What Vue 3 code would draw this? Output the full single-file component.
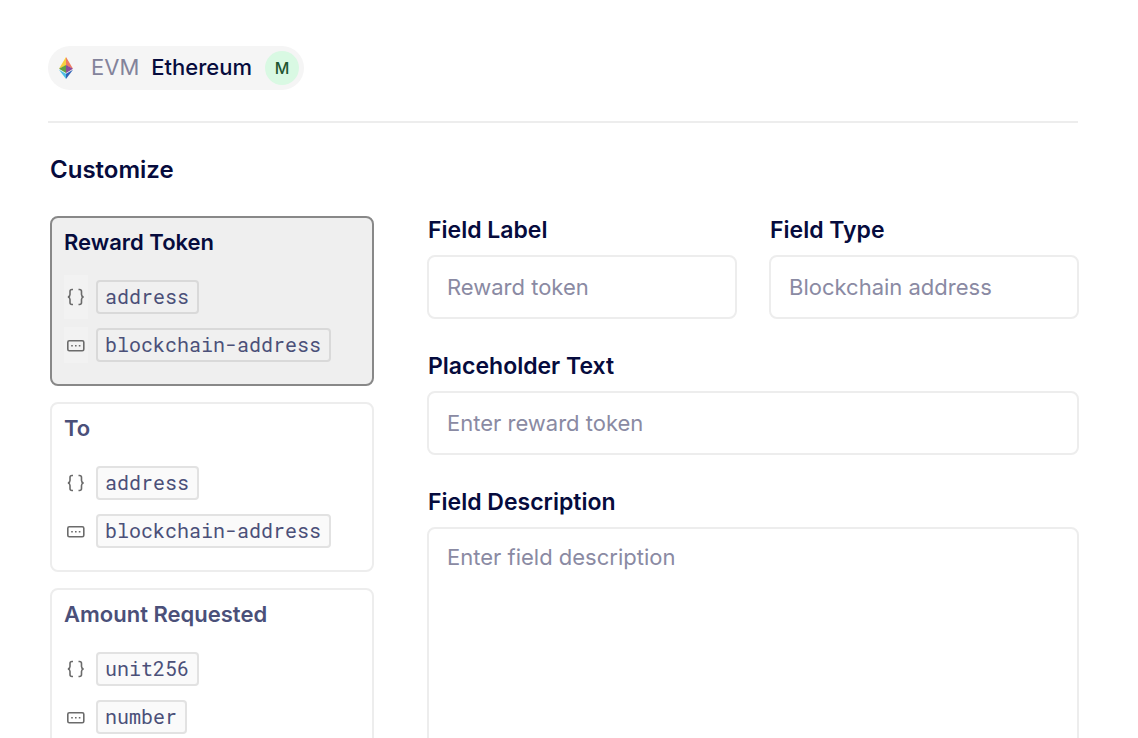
<script setup>
import { ref } from 'vue'

const selected = ref(0)
const cards = [
  { title: 'Reward Token', source: 'address', kind: 'blockchain-address' },
  { title: 'To', source: 'address', kind: 'blockchain-address' },
  { title: 'Amount Requested', source: 'unit256', kind: 'number' },
]
const label = ref('')
const type = ref('')
const placeholder = ref('')
const description = ref('')
</script>

<template>
  <main class="page">
    <header class="header">
      <div class="network">
        <svg class="eth" viewBox="0 0 14 22" aria-hidden="true">
          <path d="M7 0 0 11.8 7 8.5z" fill="#f8cf3e" />
          <path d="M7 0v8.5l7 3.300z" fill="#ef7a62" />
          <path d="M0 11.800 7 8v8z" fill="#5fa047" />
          <path d="M14 11.800 7 8v8z" fill="#8a4b9c" />
          <path d="M0 12.800 7 16.800V22z" fill="#4fbfe5" />
          <path d="M14 12.800 7 16.800V22z" fill="#2f62b5" />
        </svg>
        <span class="family">EVM</span>
        <span class="name">Ethereum</span>
        <span class="badge">M</span>
      </div>
    </header>

    <h1 class="heading">Customize</h1>

    <div class="columns">
      <div class="cards">
        <button
          v-for="(card, i) in cards"
          :key="card.title"
          type="button"
          class="card"
          :class="{ active: selected === i }"
          :aria-pressed="selected === i"
          @click="selected = i"
        >
          <span class="title">{{ card.title }}</span>
          <span class="row">
            <span class="tile tall">
              <svg class="icon" viewBox="0 0 20 20" aria-hidden="true">
                <path d="M7 2.5H6Q4 2.5 4 4.5V7.5Q4 9.5 2 10 4 10.5 4 12.5V15.5Q4 17.5 6 17.5H7" />
                <path d="M12.5 2.5H13.5Q15.5 2.5 15.5 4.5V7.5Q15.5 9.500 17.500 10 15.500 10.500 15.500 12.500V15.500Q15.500 17.500 13.500 17.500H12.500" />
              </svg>
            </span>
            <code class="chip">{{ card.source }}</code>
          </span>
          <span class="row">
            <span class="tile">
              <svg class="icon" viewBox="0 0 20 20" aria-hidden="true">
                <rect x="1.8" y="5.7" width="16" height="10" rx="1.5" />
                <path d="M5.2 10.7h1.6M9 10.7h1.6M12.8 10.7h1.6" />
              </svg>
            </span>
            <code class="chip">{{ card.kind }}</code>
          </span>
        </button>
      </div>

      <form class="form" @submit.prevent>
        <div class="pair">
          <div class="field">
            <label for="field-label">Field Label</label>
            <input id="field-label" v-model="label" class="control" type="text" placeholder="Reward token" />
          </div>
          <div class="field">
            <label for="field-type">Field Type</label>
            <input id="field-type" v-model="type" class="control" type="text" placeholder="Blockchain address" />
          </div>
        </div>
        <div class="field">
          <label for="field-placeholder">Placeholder Text</label>
          <input id="field-placeholder" v-model="placeholder" class="control" type="text" placeholder="Enter reward token" />
        </div>
        <div class="field">
          <label for="field-description">Field Description</label>
          <textarea id="field-description" v-model="description" class="control area" placeholder="Enter field description"></textarea>
        </div>
      </form>
    </div>
  </main>
</template>

<style>
body {
  background: #fff;
}
</style>

<style scoped>
.page {
  box-sizing: border-box;
  height: 100vh;
  overflow: hidden;
  padding: 46px 60px 0 48px;
  font-family: Inter, "Liberation Sans", sans-serif;
  color: #060b3d;
}
.header {
  padding-bottom: 31px;
  border-bottom: 2px solid #ededed;
}
.network {
  display: inline-flex;
  vertical-align: top;
  align-items: center;
  box-sizing: border-box;
  height: 44px;
  padding: 0 5px 0 11px;
  border-radius: 22px;
  background: #f5f5f5;
  font-size: 22px;
  line-height: 28px;
}
.eth {
  width: 14px;
  height: 22px;
  margin-right: 18px;
}
.family,
.name {
  padding-bottom: 2px;
}
.family {
  margin-right: 12px;
  color: #83839b;
}
.name {
  margin-right: 13px;
  font-weight: 500;
}
.badge {
  width: 34px;
  border-radius: 50%;
  background: #d9f9e3;
  color: #1e5631;
  font-size: 16px;
  font-weight: 500;
  line-height: 34px;
  text-align: center;
}
.heading {
  margin: 31px 0 30px 2px;
  font-size: 24px;
  font-weight: 600;
  line-height: 32px;
}
.columns {
  display: grid;
  grid-template-columns: 324px 1fr;
  gap: 53px;
  margin: 0 -1px 0 2px;
}
.cards {
  display: flex;
  flex-direction: column;
  gap: 16px;
}
.card {
  display: flex;
  flex-direction: column;
  gap: 14px;
  box-sizing: border-box;
  padding: 10px 12px 22px;
  border: 2px solid #ededed;
  border-radius: 8px;
  background: #fff;
  color: #4b5079;
  font-family: inherit;
  text-align: left;
  cursor: pointer;
}
.card.active {
  border-color: #888;
  background: #efefef;
}
.title {
  margin-bottom: 10px;
  font-size: 22px;
  font-weight: 600;
  line-height: 28px;
}
.active .title {
  color: #060b3d;
}
.row {
  display: flex;
  align-items: center;
  gap: 8px;
  height: 34px;
}
.tile {
  display: flex;
  align-items: center;
  justify-content: center;
  flex: none;
  width: 24px;
  height: 36px;
}
.tile.tall {
  height: 44px;
}
.active .tile {
  background: #f2f2f2;
}
.icon {
  width: 20px;
  height: 20px;
  fill: none;
  stroke: #6b6b6b;
  stroke-width: 1.6;
}
.chip {
  box-sizing: border-box;
  height: 34px;
  padding: 0 8px 0 7px;
  border: 2px solid #e2e2e2;
  border-radius: 4px;
  background: #fafafa;
  color: #4b5079;
  font-family: "Roboto Mono", "Liberation Mono", monospace;
  font-size: 20px;
  line-height: 28px;
}
.active .chip {
  border-color: #d9d9d9;
  background: #f0f0f0;
}
.form {
  display: flex;
  flex-direction: column;
  gap: 33px;
  min-width: 0;
}
.pair {
  display: grid;
  grid-template-columns: 1fr 1fr;
  gap: 32px;
}
.field {
  display: flex;
  flex-direction: column;
  gap: 11px;
  min-width: 0;
}
label {
  padding-left: 1px;
  font-size: 23px;
  font-weight: 600;
  line-height: 28px;
}
.control {
  box-sizing: border-box;
  width: 100%;
  height: 64px;
  padding: 0 18px;
  border: 2px solid #ededed;
  border-radius: 8px;
  background: #fff;
  color: #060b3d;
  font-family: inherit;
  font-size: 22px;
  line-height: 28px;
  outline: none;
}
.control::placeholder {
  color: #8a8aa3;
  opacity: 1;
}
.area {
  height: 240px;
  padding: 14px 18px;
  resize: none;
}
</style>
